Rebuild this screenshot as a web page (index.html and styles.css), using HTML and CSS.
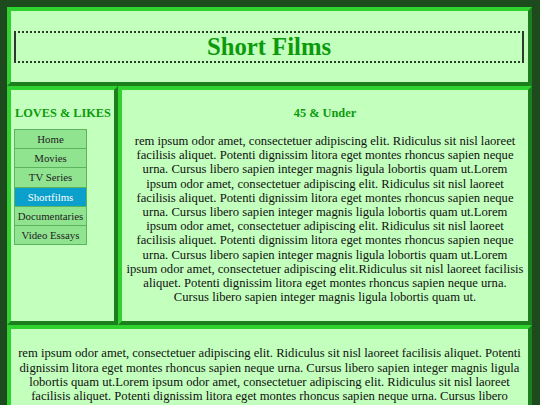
FILE: index.html
```html
<!DOCTYPE html>
<html lang="en">
<head>
<meta charset="utf-8">
<title>Short Films</title>
<link rel="stylesheet" href="styles.css">
</head>
<body>
<div class="page">
  <header class="box header">
    <h1 class="title">Short Films</h1>
  </header>
  <div class="row">
    <aside class="box sidebar">
      <h4 class="side-heading">LOVES &amp; LIKES</h4>
      <ul class="nav">
        <li class="nav-item">Home</li>
        <li class="nav-item">Movies</li>
        <li class="nav-item">TV Series</li>
        <li class="nav-item active">Shortfilms</li>
        <li class="nav-item">Documentaries</li>
        <li class="nav-item">Video Essays</li>
      </ul>
    </aside>
    <main class="box main">
      <h4 class="main-heading">45 &amp; Under</h4>
      <p class="text">rem ipsum odor amet, consectetuer adipiscing elit. Ridiculus sit nisl laoreet facilisis aliquet. Potenti dignissim litora eget montes rhoncus sapien neque urna. Cursus libero sapien integer magnis ligula lobortis quam ut.Lorem ipsum odor amet, consectetuer adipiscing elit. Ridiculus sit nisl laoreet facilisis aliquet. Potenti dignissim litora eget montes rhoncus sapien neque urna. Cursus libero sapien integer magnis ligula lobortis quam ut.Lorem ipsum odor amet, consectetuer adipiscing elit. Ridiculus sit nisl laoreet facilisis aliquet. Potenti dignissim litora eget montes rhoncus sapien neque urna. Cursus libero sapien integer magnis ligula lobortis quam ut.Lorem ipsum odor amet, consectetuer adipiscing elit.Ridiculus sit nisl laoreet facilisis aliquet. Potenti dignissim litora eget montes rhoncus sapien neque urna. Cursus libero sapien integer magnis ligula lobortis quam ut.</p>
    </main>
  </div>
  <footer class="box footer">
    <p class="text">rem ipsum odor amet, consectetuer adipiscing elit. Ridiculus sit nisl laoreet facilisis aliquet. Potenti dignissim litora eget montes rhoncus sapien neque urna. Cursus libero sapien integer magnis ligula lobortis quam ut.Lorem ipsum odor amet, consectetuer adipiscing elit. Ridiculus sit nisl laoreet facilisis aliquet. Potenti dignissim litora eget montes rhoncus sapien neque urna. Cursus libero sapien integer magnis ligula lobortis quam ut.Lorem ipsum odor amet, consectetuer adipiscing elit. Ridiculus sit nisl laoreet facilisis aliquet. Potenti dignissim litora eget montes rhoncus sapien neque urna.</p>
  </footer>
</div>
</body>
</html>
```

FILE: styles.css
```css
html, body {
  margin: 0;
  padding: 0;
}

body {
  background: #1d4b1d;
  font-family: "Liberation Serif", "Times New Roman", serif;
  font-size: 12.34px;
  color: #111;
}

.page {
  padding: 7px 8px 0 7px;
}

.box {
  background: #c3ffbd;
  border: 4px outset #2fd22f;
  box-sizing: border-box;
}

.header {
  padding: 20px 4px 19px 3px;
}

.title {
  margin: 0;
  font-size: 24.7px;
  font-weight: 700;
  text-align: center;
  color: #0c9a0c;
  border: 2px dotted #2c3a2c;
  border-left-style: solid;
  border-right-style: solid;
}

.row {
  display: flex;
}

.sidebar {
  width: 111px;
  flex: none;
  padding: 16px 3px;
}

.side-heading {
  margin: 0 0 8px 1px;
  font-size: 12.34px;
  font-weight: 700;
  color: #0c9a0c;
  white-space: nowrap;
}

.nav {
  list-style: none;
  margin: 0;
  padding: 0;
  width: 73px;
  border: 1px solid #5cb45c;
  box-sizing: border-box;
}

.nav-item {
  background: #90e490;
  border-top: 1px solid #5cb45c;
  text-align: center;
  font-size: 10.8px;
  line-height: 12.2px;
  padding: 3px 0;
  color: #222;
  white-space: nowrap;
}

.nav-item:first-child {
  border-top: none;
}

.nav-item.active {
  background: #0aa0cc;
  color: #fff;
}

.main {
  flex: 1;
  padding: 16px 4px 17px;
  text-align: center;
}

.main-heading {
  margin: 0 0 13px;
  font-size: 12.34px;
  font-weight: 700;
  color: #0c9a0c;
}

.text {
  margin: 0;
  font-size: 12.65px;
  line-height: 14.2px;
  text-align: center;
}

.footer {
  padding: 17px 4px;
}
```
